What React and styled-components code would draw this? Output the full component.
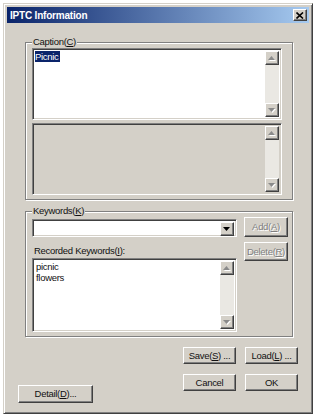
import React from "react";
import styled, { createGlobalStyle, css } from "styled-components";

const FACE = "#d4d0c8";

const GlobalStyle = createGlobalStyle`
  html, body {
    margin: 0;
    padding: 0;
    background: #fff;
  }
  body {
    font-family: "Liberation Sans", Arial, sans-serif;
    font-size: 9.5px;
    letter-spacing: -0.3px;
    color: #111;
  }
`;

const raised = css`
  border-style: solid;
  border-width: 1px;
  border-color: #fff #404040 #404040 #fff;
  box-shadow: inset -1px -1px 0 #808080;
`;

const sunken = css`
  border-style: solid;
  border-width: 1px;
  border-color: #808080 #fff #fff #808080;
  box-shadow: inset 1px 1px 0 #404040, inset -1px -1px 0 ${FACE};
`;

const Window = styled.div`
  box-sizing: border-box;
  width: 310px;
  height: 411px;
  margin: 3px 0 0 3px;
  padding: 3px;
  background: ${FACE};
  border: 1px solid;
  border-color: ${FACE} #404040 #404040 ${FACE};
  box-shadow: inset 1px 1px 0 #fff, inset -1px -1px 0 #808080;
  display: flex;
  flex-direction: column;
`;

const TitleBar = styled.div`
  height: 16px;
  display: flex;
  align-items: center;
  justify-content: space-between;
  padding: 0 2px 0 3px;
  background: linear-gradient(to right, #0a246a, #a6caf0);
`;

const TitleText = styled.span`
  font-weight: bold;
  font-size: 10px;
  letter-spacing: -0.2px;
  color: #fff;
`;

const CloseButton = styled.div`
  box-sizing: border-box;
  width: 14px;
  height: 12px;
  background: ${FACE};
  ${raised};
  display: flex;
  align-items: center;
  justify-content: center;
`;

const Group = styled.fieldset`
  margin: ${(p) => p.$top}px 16px 0 18px;
  padding: 0 ${(p) => p.$right}px 4px 6px;
  border: 1px solid #808080;
  box-shadow: 1px 1px 0 #fff, inset 1px 1px 0 #fff;
  min-width: 0;
`;

const Legend = styled.legend`
  padding: 0 1px;
  line-height: 12px;
  background: ${FACE};
`;

const Mn = styled.span`
  text-decoration: underline;
`;

const Field = styled.div`
  box-sizing: border-box;
  height: ${(p) => p.$h}px;
  margin-top: ${(p) => p.$mt || 0}px;
  background: ${(p) => (p.$disabled ? FACE : "#fff")};
  ${sunken};
  padding: 2px;
  display: flex;
`;

const FieldBody = styled.div`
  flex: 1;
  min-width: 0;
  padding: ${(p) => p.$pad || "0"};
`;

const Selected = styled.span`
  background: #0a246a;
  color: #fff;
  display: inline-block;
  padding: 0 1px 0 0;
  line-height: 11px;
`;

const ScrollBar = styled.div`
  width: 14px;
  display: flex;
  flex-direction: column;
`;

const Track = styled.div`
  flex: 1;
  background: #eae8e3;
`;

const ArrowBtn = styled.div`
  box-sizing: border-box;
  width: 14px;
  height: ${(p) => p.$h || 14}px;
  background: ${FACE};
  ${raised};
  display: flex;
  align-items: center;
  justify-content: center;
`;

const KeywordGrid = styled.div`
  display: grid;
  grid-template-columns: 205px 44px;
  column-gap: 7px;
  align-items: start;
`;

const Column = styled.div`
  display: flex;
  flex-direction: column;
`;

const Label = styled.div`
  margin-top: 8px;
  line-height: 12px;
  padding-left: 2px;
`;

const Button = styled.div`
  box-sizing: border-box;
  width: ${(p) => p.$w}px;
  height: ${(p) => p.$h || 17}px;
  margin-top: ${(p) => p.$mt || 0}px;
  background: ${FACE};
  ${raised};
  display: flex;
  align-items: center;
  justify-content: center;
  line-height: 12px;
  color: ${(p) => (p.$disabled ? "#808080" : "#111")};
  text-shadow: ${(p) => (p.$disabled ? "1px 1px 0 #fff" : "none")};
`;

const Footer = styled.div`
  display: flex;
  justify-content: space-between;
  align-items: flex-start;
  margin-top: 10px;
  padding: 0 11px;
`;

const ButtonGrid = styled.div`
  display: grid;
  grid-template-columns: 53px 53px;
  column-gap: 9px;
  row-gap: 10px;
`;

const ListItem = styled.div`
  line-height: 10.5px;
`;

function Arrow({ dir, disabled }) {
  const pts = dir === "up" ? "3.5,0 7,4 0,4" : "0,0 7,0 3.5,4";
  return (
    <svg width="8" height="5" viewBox="0 0 8 5">
      {disabled && (
        <polygon points={pts} fill="#fff" transform="translate(1,1)" />
      )}
      <polygon points={pts} fill={disabled ? "#8a8a8a" : "#000"} />
    </svg>
  );
}

function VScroll({ disabled }) {
  return (
    <ScrollBar>
      <ArrowBtn>
        <Arrow dir="up" disabled={disabled} />
      </ArrowBtn>
      <Track />
      <ArrowBtn>
        <Arrow dir="down" disabled={disabled} />
      </ArrowBtn>
    </ScrollBar>
  );
}

export default function App() {
  return (
    <>
      <GlobalStyle />
      <Window>
        <TitleBar>
          <TitleText>IPTC Information</TitleText>
          <CloseButton>
            <svg width="8" height="7" viewBox="0 0 8 7">
              <path d="M0.5 0.5 L7 6.5 M7 0.5 L0.5 6.5" stroke="#000" strokeWidth="1.6" />
            </svg>
          </CloseButton>
        </TitleBar>

        <Group $top={13} $right={10}>
          <Legend>
            Caption(<Mn>C</Mn>)
          </Legend>
          <Field $h={72}>
            <FieldBody>
              <Selected>Picnic</Selected>
            </FieldBody>
            <VScroll disabled />
          </Field>
          <Field $h={72} $mt={3} $disabled>
            <FieldBody />
            <VScroll disabled />
          </Field>
        </Group>

        <Group $top={5} $right={4}>
          <Legend>
            Keywords(<Mn>K</Mn>)
          </Legend>
          <KeywordGrid>
            <Column>
              <Field $h={18} $mt={2}>
                <FieldBody />
                <ArrowBtn $h={14}>
                  <Arrow dir="down" />
                </ArrowBtn>
              </Field>
              <Label>
                Recorded Keywords(<Mn>I</Mn>):
              </Label>
              <Field $h={74} $mt={1}>
                <FieldBody $pad="1px 0 0 1px">
                  <ListItem>picnic</ListItem>
                  <ListItem>flowers</ListItem>
                </FieldBody>
                <VScroll disabled />
              </Field>
            </Column>
            <Column>
              <Button $w={44} $h={20} $disabled>
                Add(<Mn>A</Mn>)
              </Button>
              <Button $w={44} $h={19} $mt={5} $disabled>
                Delete(<Mn>R</Mn>)
              </Button>
            </Column>
          </KeywordGrid>
        </Group>

        <Footer>
          <Button $w={75} $h={18} $mt={38}>
            Detail(<Mn>D</Mn>)...
          </Button>
          <ButtonGrid>
            <Button $w={53}>
              Save(<Mn>S</Mn>) ...
            </Button>
            <Button $w={53}>
              Load(<Mn>L</Mn>) ...
            </Button>
            <Button $w={53}>Cancel</Button>
            <Button $w={53}>OK</Button>
          </ButtonGrid>
        </Footer>
      </Window>
    </>
  );
}
